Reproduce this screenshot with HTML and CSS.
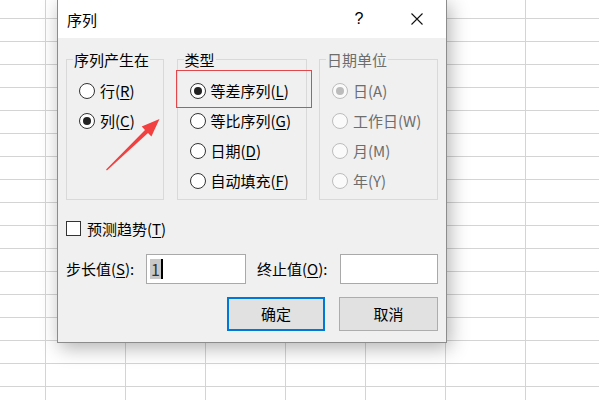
FILE: index.html
```html
<!DOCTYPE html>
<html lang="zh-CN">
<head>
<meta charset="utf-8">
<title>序列</title>
<link rel="stylesheet" href="styles.css">
</head>
<body>
<div class="sheet">
  <div class="dialog">
    <div class="titlebar">
      <span class="title">序列</span>
      <span class="tbtn help">?</span>
      <span class="tbtn close">
        <svg width="12" height="12" viewBox="0 0 12 12"><path d="M0.5 0.5 L11.5 11.5 M11.5 0.5 L0.5 11.5" stroke="#111" stroke-width="1.1" fill="none"/></svg>
      </span>
    </div>
    <div class="body">
      <div class="groups">
        <fieldset class="group g1">
          <legend>序列产生在</legend>
          <div class="opts">
            <div class="opt"><span class="radio"></span><span>行(<u>R</u>)</span></div>
            <div class="opt"><span class="radio on"></span><span>列(<u>C</u>)</span></div>
          </div>
        </fieldset>
        <fieldset class="group g2">
          <legend>类型</legend>
          <div class="opts">
            <div class="opt"><span class="radio on"></span><span>等差序列(<u>L</u>)</span></div>
            <div class="opt"><span class="radio"></span><span>等比序列(<u>G</u>)</span></div>
            <div class="opt"><span class="radio"></span><span>日期(<u>D</u>)</span></div>
            <div class="opt"><span class="radio"></span><span>自动填充(<u>F</u>)</span></div>
          </div>
        </fieldset>
        <fieldset class="group g3 disabled">
          <legend>日期单位</legend>
          <div class="opts">
            <div class="opt"><span class="radio on"></span><span>日(A)</span></div>
            <div class="opt"><span class="radio"></span><span>工作日(W)</span></div>
            <div class="opt"><span class="radio"></span><span>月(M)</span></div>
            <div class="opt"><span class="radio"></span><span>年(Y)</span></div>
          </div>
        </fieldset>
      </div>
      <div class="checkrow"><span class="checkbox"></span><span>预测趋势(<u>T</u>)</span></div>
      <div class="fieldrow">
        <span class="flabel l1">步长值(<u>S</u>):</span>
        <div class="field f1"><span class="sel">1</span><span class="caret"></span></div>
        <span class="flabel l2">终止值(<u>O</u>):</span>
        <div class="field f2"></div>
      </div>
      <div class="btnrow">
        <div class="btn default">确定</div>
        <div class="btn">取消</div>
      </div>
    </div>
    <div class="highlight"></div>
  </div>
  <svg class="arrow" width="70" height="65" viewBox="0 0 70 65">
    <polygon points="6.1,59.6 45,19.9 41.7,16.5 59.5,9 51.4,26.5 48,23.1 6.9,60.4" fill="#f23f3f"/>
  </svg>
</div>
</body>
</html>
```

FILE: styles.css
```css
html, body {
  margin: 0;
  padding: 0;
}
body {
  font-family: "Noto Sans CJK SC", "Noto Sans", sans-serif;
  font-size: 15px;
  color: #000;
}
.sheet {
  position: relative;
  width: 599px;
  height: 400px;
  overflow: hidden;
  background-color: #fff;
  background-image:
    linear-gradient(to right, #d4d4d4 1px, transparent 1px),
    linear-gradient(to bottom, #d4d4d4 1px, transparent 1px);
  background-size: 80px 23px;
  background-position: 45px 18px;
}
.dialog {
  position: absolute;
  left: 57px;
  top: -1px;
  width: 390px;
  height: 344px;
  box-sizing: border-box;
  border: 1px solid #8c8c8c;
  background: #f0f0f0;
  box-shadow: 3px 5px 18px rgba(0, 0, 0, 0.3);
}
.titlebar {
  height: 38px;
  background: #fff;
  display: flex;
  align-items: center;
  padding-right: 6px;
}
.title {
  flex: 1;
  padding-left: 9px;
  line-height: 20px;
  padding-top: 1px;
}
.tbtn {
  width: 46px;
  display: flex;
  justify-content: center;
  align-items: center;
  height: 38px;
}
.help {
  margin-right: 12px;
  font-family: "Liberation Sans", sans-serif;
  font-size: 16px;
}
.body {
  padding: 11px 8px 11px;
}
.groups {
  display: flex;
  justify-content: space-between;
}
.group {
  margin: 0;
  padding: 0;
  border: 1px solid #d9d9d9;
  box-sizing: border-box;
  height: 151px;
  min-width: 0;
}
.g1 { width: 98px; }
.g2 { width: 130px; }
.g3 { width: 119px; }
.group legend {
  margin-left: 6px;
  padding: 0 1px;
  line-height: 21px;
  font-size: 15px;
}
.opts {
  padding: 6px 0 0 12px;
}
.opt {
  height: 30px;
  display: flex;
  align-items: center;
  gap: 5px;
  white-space: nowrap;
  line-height: 20px;
}
.radio {
  width: 16px;
  height: 16px;
  box-sizing: border-box;
  border: 1px solid #333;
  border-radius: 50%;
  background: #fff;
  display: flex;
  align-items: center;
  justify-content: center;
  flex: none;
}
.radio.on::after {
  content: "";
  width: 8px;
  height: 8px;
  border-radius: 50%;
  background: #222;
}
.disabled {
  color: #6d6d6d;
}
.disabled .radio {
  border-color: #bcbcbc;
  background: #fafafa;
}
.disabled .radio.on::after {
  background: #bcbcbc;
}
u {
  text-decoration-thickness: 1px;
  text-underline-offset: 2px;
}
.checkrow {
  margin-top: 18px;
  height: 21px;
  display: flex;
  align-items: center;
  gap: 6px;
  line-height: 21px;
}
.checkbox {
  width: 15px;
  height: 15px;
  box-sizing: border-box;
  border: 1px solid #333;
  background: #fff;
  flex: none;
}
.fieldrow {
  margin-top: 15px;
  display: flex;
  align-items: center;
  height: 30px;
}
.flabel {
  line-height: 20px;
  white-space: nowrap;
}
.l1 { width: 80px; }
.l2 { width: 83px; margin-left: 11px; }
.field {
  height: 30px;
  box-sizing: border-box;
  border: 1px solid #a9a9a9;
  background: #fff;
  display: flex;
  align-items: center;
  padding-left: 3px;
}
.f1 { width: 100px; }
.f2 { width: 98px; }
.sel {
  background: #c8c8c8;
  color: #333;
  line-height: 20px;
  font-size: 16px;
  padding: 0 1px;
}
.caret {
  width: 2px;
  height: 20px;
  background: #000;
}
.btnrow {
  margin-top: 13px;
  display: flex;
  justify-content: flex-end;
  gap: 14px;
}
.btn {
  width: 99px;
  height: 34px;
  box-sizing: border-box;
  border: 1px solid #adadad;
  background: #e1e1e1;
  display: flex;
  align-items: center;
  justify-content: center;
  line-height: 20px;
}
.btn.default {
  width: 98px;
  border: 2px solid #0078d7;
}
.highlight {
  position: absolute;
  left: 118px;
  top: 70px;
  width: 136px;
  height: 38px;
  box-sizing: border-box;
  border: 1px solid #e2474b;
}
.arrow {
  position: absolute;
  left: 100px;
  top: 110px;
}
```
